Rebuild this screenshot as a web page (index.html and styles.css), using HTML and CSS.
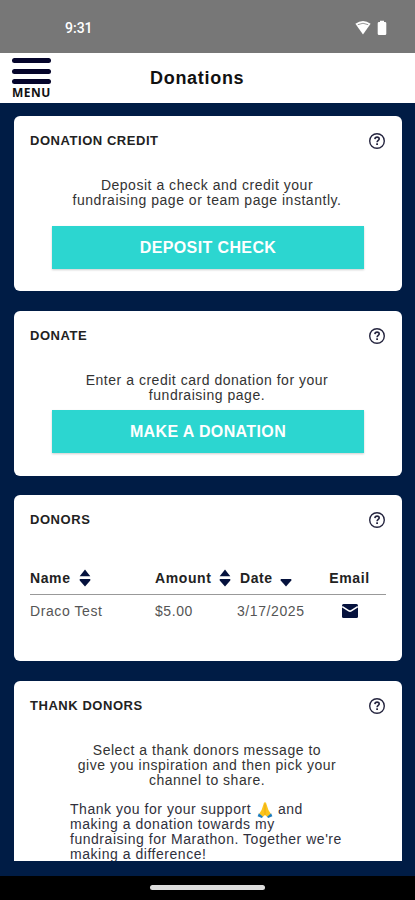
FILE: index.html
```html
<!DOCTYPE html>
<html lang="en">
<head>
<meta charset="utf-8">
<meta name="viewport" content="width=device-width, initial-scale=1">
<title>Donations</title>
<link rel="stylesheet" href="styles.css">
</head>
<body>
<svg class="defs" width="0" height="0" aria-hidden="true">
  <symbol id="help" viewBox="0 0 18 18">
    <circle cx="9" cy="9" r="7.3" fill="none" stroke="currentColor" stroke-width="1.4"/>
    <path d="M6.9 7.1C7 5.7 7.9 5.1 9.1 5.1C10.3 5.1 11.2 5.8 11.2 6.9C11.2 8.3 9.1 8.5 9.1 10.2" fill="none" stroke="currentColor" stroke-width="1.6"/>
    <rect x="8.2" y="11.3" width="1.8" height="1.7" fill="currentColor"/>
  </symbol>
  <symbol id="sort" viewBox="0 0 12 18">
    <path d="M6 .6L11.3 7.2H.7ZM.7 10H11.3V11.4L6 17.4L.7 11.4Z" fill="currentColor"/>
  </symbol>
</svg>
<div class="status">
  <time>9:31</time>
  <div class="status-icons">
    <svg width="18" height="16" viewBox="0 0 18 16"><path d="M1.4 3.8Q9-2 16.6 3.8L9 14.4Z" fill="#fff"/><path d="M3.8 4.7Q9 1.8 14.2 4.7" fill="none" stroke="#999" stroke-width="1"/></svg>
    <svg width="10" height="16" viewBox="0 0 10 16"><path d="M3 .8H7V2H8Q9.3 2 9.3 3.3V13.7Q9.3 15 8 15H2Q.7 15 .7 13.7V3.3Q.7 2 2 2H3Z" fill="#fff"/></svg>
  </div>
</div>
<header class="header">
  <div class="menu"><i></i><i></i><i></i><span>MENU</span></div>
  <h1>Donations</h1>
</header>
<main class="content">
  <section class="card credit">
    <div class="card-head"><h2>DONATION CREDIT</h2><svg class="help"><use href="#help"/></svg></div>
    <p class="intro">Deposit a check and credit your<br>fundraising page or team page instantly.</p>
    <div class="button deposit">DEPOSIT CHECK</div>
  </section>
  <section class="card donate">
    <div class="card-head"><h2>DONATE</h2><svg class="help"><use href="#help"/></svg></div>
    <p class="intro">Enter a credit card donation for your<br>fundraising page.</p>
    <div class="button">MAKE A DONATION</div>
  </section>
  <section class="card donors">
    <div class="card-head"><h2>DONORS</h2><svg class="help"><use href="#help"/></svg></div>
    <div class="row labels">
      <div>Name<svg class="sort"><use href="#sort"/></svg></div>
      <div>Amount<svg class="sort snug"><use href="#sort"/></svg></div>
      <div class="date-label">Date<svg class="sort snug" viewBox="0 0 12 18"><path d="M.7 10H11.3V11.4L6 17.4L.7 11.4Z" fill="currentColor"/></svg></div>
      <div class="email">Email</div>
    </div>
    <div class="row values">
      <div>Draco Test</div>
      <div class="amount">$5.00</div>
      <div class="date">3/17/2025</div>
      <div class="email"><svg class="mail" width="18" height="14" viewBox="0 0 18 14"><rect x="1" width="16" height="14" rx="1.5" fill="#05123d"/><path d="M1.2 2.6L7.5 6.6Q9 7.6 10.5 6.6L16.8 2.6" fill="none" stroke="#fff" stroke-width="1.7"/></svg></div>
    </div>
  </section>
  <section class="card thank">
    <div class="card-head"><h2>THANK DONORS</h2><svg class="help"><use href="#help"/></svg></div>
    <p class="intro">Select a thank donors message to<br>give you inspiration and then pick your<br>channel to share.</p>
    <p class="message">Thank you for your support <svg class="pray" viewBox="0 0 16 16"><path d="M8 .2C9 .2 9.2 1 9.4 2L11.4 8L13.8 11.8L10.3 15L8 13L5.7 15L2.2 11.8L4.6 8L6.6 2C6.8 1 7 .2 8 .2Z" fill="#fbc51b"/><path d="M8 2V12.8" stroke="#e59b14" stroke-width=".7"/><path d="M1.9 11.2L6 14.8L4.8 16L.6 14.2ZM14.1 11.2L10 14.8L11.2 16L15.4 14.2Z" fill="#207fc0"/></svg> and<br>making a donation towards my<br>fundraising for Marathon. Together we're<br>making a difference!</p>
  </section>
</main>
<footer class="nav"><div class="pill"></div></footer>
</body>
</html>
```
FILE: styles.css
```css
* { box-sizing: border-box; }
body {
  margin: 0;
  height: 900px;
  display: flex;
  flex-direction: column;
  overflow: hidden;
  background: #001c45;
  color: #333;
  font: 14px/15px "Liberation Sans", Arial, sans-serif;
}
h1, h2, p { margin: 0; }
.defs { position: absolute; }
.status {
  height: 53px;
  flex: none;
  display: flex;
  justify-content: space-between;
  padding: 20px 28px 0 65px;
  background: #777;
  color: #fff;
}
.status time { font: 500 14px/16px Roboto, sans-serif; letter-spacing: 0; }
.status-icons { display: flex; gap: 5px; }
.header {
  height: 50px;
  flex: none;
  display: grid;
  grid-template-columns: 62px 1fr 82px;
  background: #fff;
  color: #111;
}
.menu {
  display: flex;
  flex-direction: column;
  align-items: flex-start;
  gap: 5.5px;
  padding: 5px 0 0 12px;
}
.menu i { width: 39px; height: 5px; border-radius: 3px; background: #05052b; }
.menu span { margin-top: -2.5px; font: 700 12px/12px "Open Sans", sans-serif; letter-spacing: .5px; }
h1 { padding-left: 88px; font-size: 18px; line-height: 50px; letter-spacing: .7px; white-space: nowrap; }
.content { height: 758px; flex: none; padding: 13px 13px 0 14px; overflow: hidden; }
.card { background: #fff; border-radius: 6px; padding: 16px 16px 0; margin-bottom: 19.5px; }
.credit { height: 175px; }
.donate { height: 165px; }
.donors { height: 166px; }
.thank { height: 220px; }
.card-head { height: 18px; display: flex; align-items: center; justify-content: space-between; }
h2 { color: #222; font-size: 13px; line-height: 18px; letter-spacing: .55px; }
.help { width: 18px; height: 18px; color: #25253f; }
.intro { margin-top: 28px; text-align: center; letter-spacing: .52px; margin-left: -2px; }
.button {
  height: 43px;
  margin: 7px 22px 0;
  background: #2cd6d0;
  color: #fff;
  font-weight: 700;
  font-size: 16px;
  line-height: 43px;
  letter-spacing: .38px;
  text-align: center;
  box-shadow: 0 1px 2px #0003;
}
.deposit { margin-top: 18px; }
.row { display: grid; grid-template-columns: 125px 85px 85px 1fr; align-items: center; }
.row > div { display: flex; align-items: center; white-space: nowrap; }
.labels { height: 33px; margin-top: 33px; border-bottom: 1px solid #999; color: #222; font-weight: 700; letter-spacing: .6px; }
.sort { width: 12px; height: 18px; margin-left: 8px; color: #05123d; }
.sort.snug { margin-left: 7.5px; }
.values { height: 32px; color: #555; letter-spacing: .58px; }
.row .date { margin-left: -3px; }
.row .email { justify-content: center; margin-left: -12px; }
.row .mail { margin-left: 1px; }
.message { margin: 14px 0 0 40px; white-space: nowrap; letter-spacing: .53px; color: #30303c; }
.message { padding-top: .5px; }
.pray { width: 16px; height: 16px; margin: -3px 1px -3px 1px; vertical-align: -1px; }
.nav { height: 24px; margin-top: 15px; flex: none; background: #000; display: flex; justify-content: center; padding-top: 9px; }
.pill { width: 115px; height: 5px; border-radius: 3px; background: #ddd; }
```
